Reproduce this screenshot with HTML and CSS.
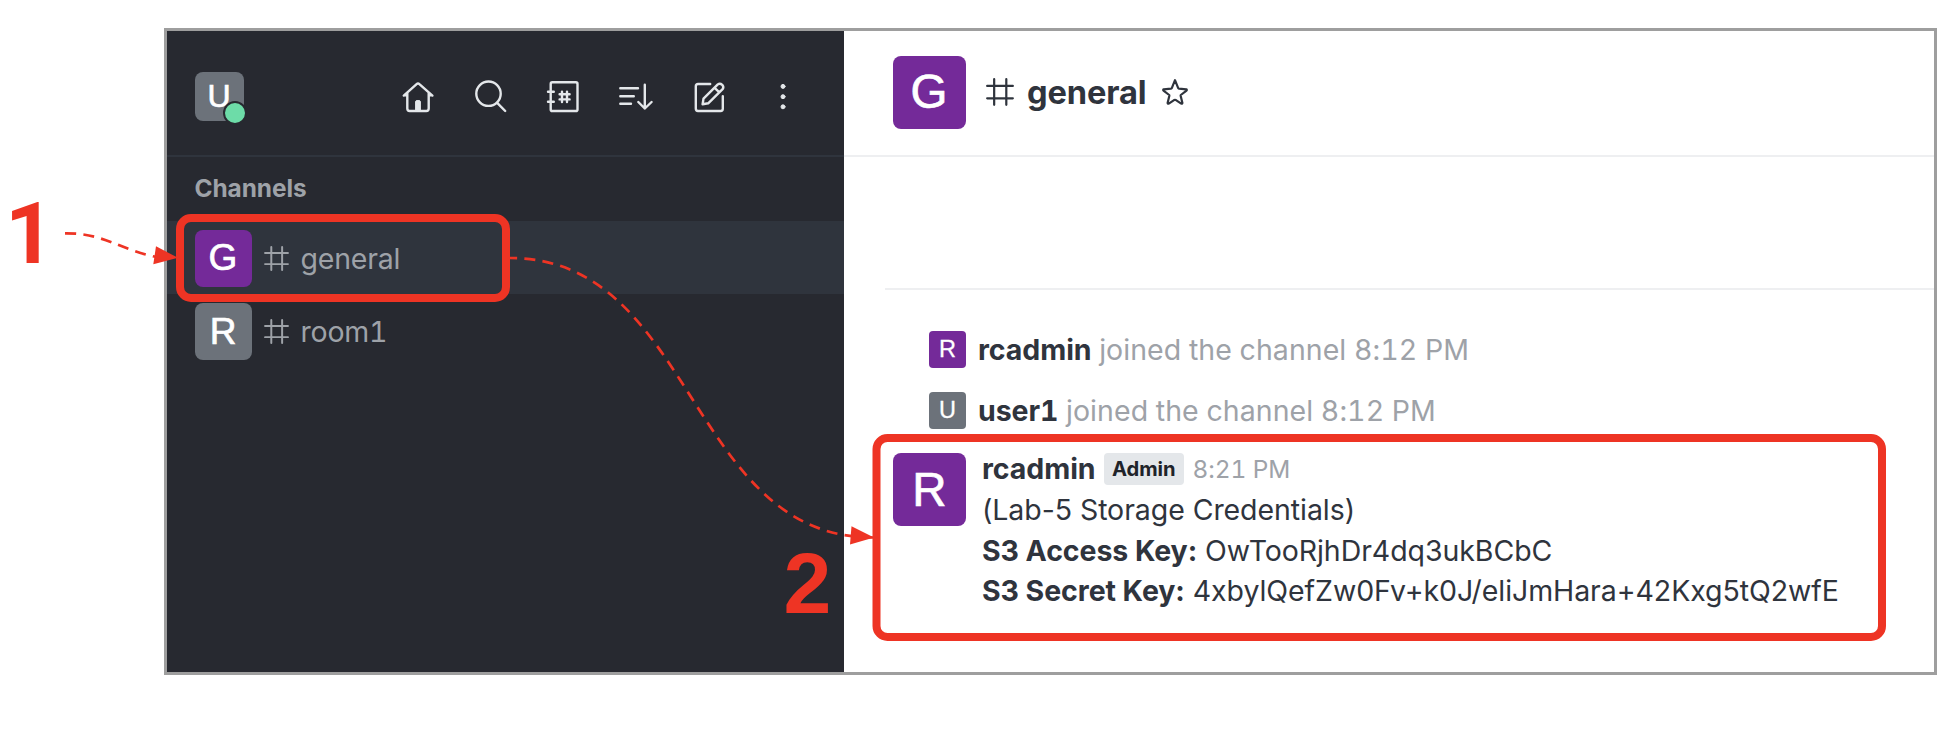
FILE: index.html
```html
<!DOCTYPE html>
<html lang="en">
<head>
<meta charset="utf-8">
<title>general</title>
<link rel="stylesheet" href="styles.css">
</head>
<body>
<svg width="0" height="0" class="defs">
  <symbol id="hash" viewBox="0 0 24 24"><path d="M7 1V23M17.4 1V23M1 6.8H23M1 17.4H23"/></symbol>
</svg>
<div class="window">
  <aside class="sidebar">
    <header class="toolbar">
      <div class="avatar avatar-user grey">U<span class="status"></span></div>
      <nav class="tools">
        <svg class="icon" viewBox="0 0 40 40"><path d="M5.8 18.6 18.6 7.1Q20 5.8 21.4 7.1L34.4 18.6M9.3 16V31.6Q9.3 34 11.7 34H28.3Q30.7 34 30.7 31.6V16M6 18.4H9M31 18.4H34"/><path class="solid" d="M17.6 34V25Q17.6 23.6 19 23.6H21Q22.4 23.6 22.4 25V34Z"/></svg>
        <svg class="icon" viewBox="0 0 40 40"><circle cx="17.5" cy="16.7" r="12.2"/><path d="M26.2 25.8 34.2 34"/></svg>
        <svg class="icon" viewBox="0 0 40 40"><rect x="6.7" y="5.3" width="26.8" height="28.7" rx="1.6"/><path d="M4 14.7H9.8M4 24.7H9.8M18 14.6V25M23 14.6V25M15.6 17.2H25.6M15.6 22.4H25.6"/></svg>
        <svg class="icon" viewBox="0 0 40 40"><path d="M3.3 11.3H21M3.3 19.3H16.8M3.3 26.7H14M27.8 7.7V31.4M21.3 25 27.8 31.5 34.6 25"/></svg>
        <svg class="icon" viewBox="0 0 40 40"><path d="M20.2 7H8Q5.8 7 5.8 9.2V31.6Q5.8 34 8 34H30.6Q32.8 34 32.8 31.8V19.2"/><path d="M12.6 27.2 13.5 21.6 27.8 7.4Q30 5.8 32.2 7.8 34.2 10.2 32.6 12.2L18.2 26.3ZM24.6 10.8 29.4 15.4"/></svg>
        <svg class="icon" viewBox="0 0 40 40"><circle class="solid" cx="20" cy="9.4" r="2"/><circle class="solid" cx="20" cy="19.7" r="2"/><circle class="solid" cx="20" cy="29.8" r="2"/></svg>
      </nav>
    </header>
    <h2 class="section">Channels</h2>
    <div class="room active"><div class="avatar avatar-room purple">G</div><svg class="hash"><use href="#hash"/></svg><span class="room-name">general</span></div>
    <div class="room"><div class="avatar avatar-room grey">R</div><svg class="hash"><use href="#hash"/></svg><span class="room-name">room1</span></div>
  </aside>
  <main class="chat">
    <header class="chat-header">
      <div class="avatar avatar-large purple">G</div>
      <svg class="hash hash-title"><use href="#hash"/></svg>
      <h1 class="title">general</h1>
      <svg class="star" viewBox="0 0 26 26"><path d="M13 1.2 16.2 9.1Q16.4 9.6 17 9.7L24.3 10.3Q25.2 10.8 24.5 11.6L18.8 16Q18.6 16.4 18.7 17L20.4 24Q20.2 25 19.2 24.6L13.6 20.9Q13 20.6 12.4 20.9L6.8 24.6Q5.8 25 5.6 24L7.3 17Q7.4 16.4 7.2 16L1.5 11.6Q.8 10.8 1.7 10.3L9 9.7Q9.6 9.6 9.8 9.1Z"/></svg>
    </header>
    <div class="history">
      <div class="event"><div class="avatar avatar-small purple">R</div><p><b>rcadmin</b> <span>joined the channel 8:12 PM</span></p></div>
      <div class="event"><div class="avatar avatar-small grey">U</div><p><b>user1</b> <span>joined the channel 8:12 PM</span></p></div>
      <article class="message">
        <div class="avatar avatar-large purple">R</div>
        <div class="body">
          <div class="meta"><b>rcadmin</b><span class="badge">Admin</span><time>8:21 PM</time></div>
          <p>(Lab-5 Storage Credentials)</p>
          <p><b>S3 Access Key:</b> OwTooRjhDr4dq3ukBCbC</p>
          <p><b>S3 Secret Key:</b> 4xbylQefZw0Fv+k0J/eliJmHara+42Kxg5tQ2wfE</p>
        </div>
      </article>
    </div>
  </main>
</div>
<svg class="notes" viewBox="0 0 1960 730">
  <rect class="frame" x="180" y="218" width="326" height="80" rx="11"/>
  <rect class="frame" x="876.5" y="438" width="1005.5" height="199" rx="11"/>
  <path class="link" d="M65 233.3C104 233 118 249 156 257"/>
  <path class="link second" d="M510 258C695 258 688 537.5 873 537.5"/>
  <path class="head" d="M156 246.3 178 257.8 153.3 264.3Z"/>
  <path class="head" d="M851.5 526.2 874 537.5 850 544.4Z"/>
  <text class="num one" x="5" y="263">1</text>
  <text class="num" x="783.5" y="613">2</text>
</svg>
</body>
</html>
```
FILE: styles.css
```css
* { box-sizing: border-box; }
body { margin: 0; padding: 28px 0 0 163.5px; width: 1960px; height: 730px; overflow: hidden; background: #fff; font-family: Inter, "Liberation Sans", sans-serif; font-size: 28.5px; line-height: 40.7px; letter-spacing: -.06px; font-variant-numeric: tabular-nums; color: #2f343d; position: relative; }
h1, h2, p { margin: 0; }
b { font-weight: 700; }
.defs { position: absolute; }
.window { display: flex; width: 1773.5px; height: 647px; border: 3px solid #9e9e9e; }
.sidebar { width: 677.5px; background: #272930; color: #9ea2a8; }
.toolbar { display: flex; align-items: center; justify-content: space-between; height: 126px; padding: 7px 41px 0 28px; border-bottom: 2px solid #2f343d; }
.avatar { display: flex; align-items: center; justify-content: center; flex: none; color: #fff; font-family: "Liberation Sans", Arial, sans-serif; letter-spacing: 0; -webkit-text-stroke: .7px #fff; position: relative; }
.purple { background: #742a99; }
.grey { background: #6c727a; }
.avatar-user { width: 49px; height: 49px; border-radius: 8px; font-size: 32px; }
.avatar-room { width: 57px; height: 57px; border-radius: 8px; font-size: 37px; padding-top: 1px; }
.avatar-large { width: 73px; height: 73px; border-radius: 8px; font-size: 47.5px; padding-top: 1px; }
.avatar-small { width: 37px; height: 37px; border-radius: 4px; font-size: 23.5px; -webkit-text-stroke-width: .3px; }
.status { position: absolute; right: -3.5px; bottom: -4px; width: 24px; height: 24px; border: 2px solid #272930; border-radius: 50%; background: #6ddca8; }
.tools { display: flex; gap: 33px; }
.icon { width: 40px; height: 40px; fill: none; stroke: #e4e7ea; stroke-width: 2.4; stroke-linecap: round; stroke-linejoin: round; }
.icon .solid { fill: #e4e7ea; stroke-width: 1; }
.section { height: 64px; padding: 0 0 0 28px; font-size: 24.4px; line-height: 62px; font-weight: 700; }
.room { display: flex; align-items: center; height: 73.3px; padding: 1px 0 0 28px; }
.room-name { letter-spacing: -.2px; position: relative; top: 1px; }
.active { background: #2f343d; }
.hash { width: 25px; height: 25px; margin: 0 12px; fill: none; stroke: currentColor; stroke-width: 1.9; stroke-linecap: round; }
.chat { flex: 1; background: #fff; }
.chat-header { display: flex; align-items: center; height: 126px; padding: 0 0 2px 48.5px; border-bottom: 2px solid #eeeff1; }
.hash-title { width: 28px; height: 28px; margin: 0 13px 0 20.5px; }
.title { font-size: 32.6px; font-weight: 700; letter-spacing: -.1px; }
.star { width: 26px; height: 26px; margin-left: 15.5px; fill: none; stroke: #2f343d; stroke-width: 2.2; stroke-linejoin: round; }
.history { margin: 130.5px 0 0 41px; border-top: 2px solid #eeeff1; padding-top: 29.5px; }
.event { display: flex; align-items: center; height: 61px; padding-left: 44px; }
.event p { margin-left: 12px; padding-top: 1px; }
.event span, time { color: #9ea2a8; }
.event span { letter-spacing: .05px; }
.message { display: flex; padding: 12px 0 0 8px; }
.body { margin-left: 16px; }
.body p { font-variant-numeric: normal; letter-spacing: -.07px; }
.meta { display: flex; align-items: center; height: 34px; margin: -1px 0 4px; }
.badge { margin: 0 9px 0 8.5px; height: 32px; padding: 0 8px; border-radius: 4px; background: #e4e7ea; color: #1f2329; font-size: 20.2px; line-height: 32px; font-weight: 700; }
time { font-size: 24.4px; }
.notes { position: absolute; inset: 0; width: 1960px; height: 730px; letter-spacing: 0; }
.frame { fill: none; stroke: #ee3424; stroke-width: 8; }
.link { fill: none; stroke: #ee3424; stroke-width: 2.7; stroke-dasharray: 11 7.3; }
.second { stroke-dashoffset: 4; }
.head, .num { fill: #ee3424; }
.num { font: 700 86px "Liberation Sans", sans-serif; }
.one { font-family: Roboto, sans-serif; }
```
